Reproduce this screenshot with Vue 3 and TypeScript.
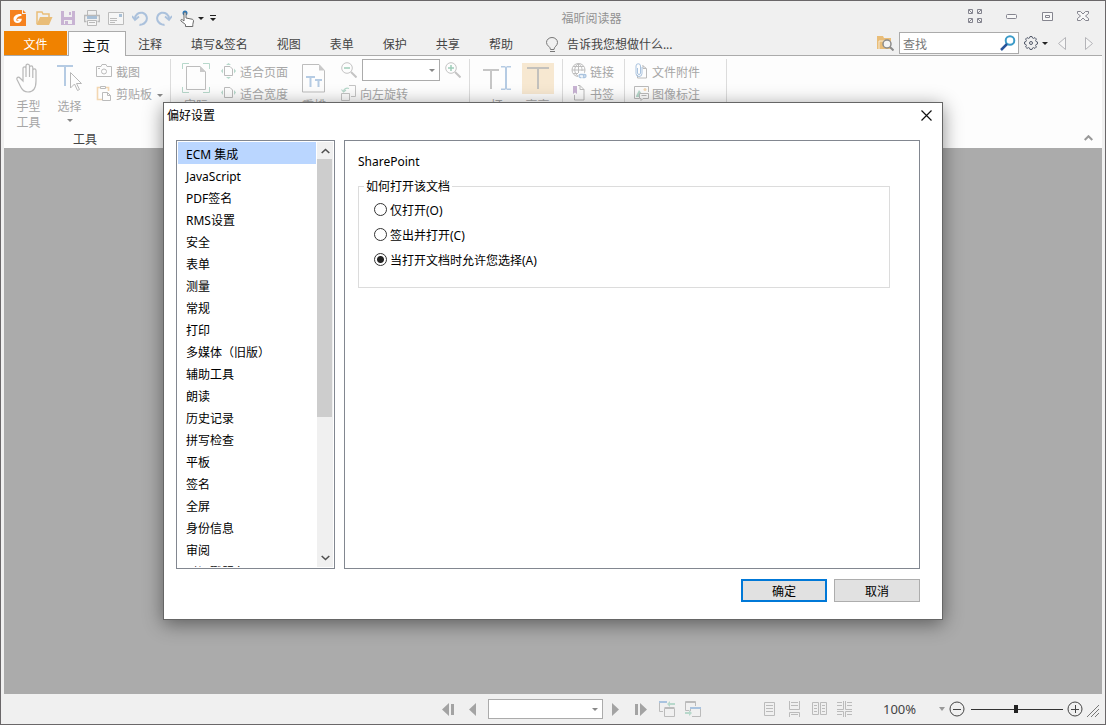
<script setup lang="ts">
import { ref } from 'vue'

const tabs: string[] = ['注释', '填写&签名', '视图', '表单', '保护', '共享', '帮助']

const categories: string[] = [
  'ECM 集成', 'JavaScript', 'PDF签名', 'RMS设置', '安全', '表单', '测量', '常规', '打印',
  '多媒体（旧版）', '辅助工具', '朗读', '历史记录', '拼写检查', '平板', '签名', '全屏',
  '身份信息', '审阅', '时间戳服务器',
]
const current = ref<string>('ECM 集成')

interface OpenMode { value: string; label: string }
const modes: OpenMode[] = [
  { value: 'open', label: '仅打开(O)' },
  { value: 'checkout', label: '签出并打开(C)' },
  { value: 'ask', label: '当打开文档时允许您选择(A)' },
]
const mode = ref<string>('ask')
const search = ref<string>('')
const dialogOpen = ref<boolean>(true)
</script>

<template>
  <div class="window">
    <header class="titlebar">
      <div class="quick">
        <span class="q logo">
          <svg width="16" height="16" viewBox="0 0 16 16"><path d="M0 0h12v4h4v12H0z" fill="#f5821f" /><path d="M13 0l3 3h-3z" fill="#f5821f" /><path d="M11.500 4.200C7 3.600 3.500 6 3.500 9.200c0 2.300 1.800 3.800 4 3.800 2.600 0 4.300-1.800 4.300-4.300H8.200c-.8 0-1.200 1-.9 1.800h1.600c-.4.6-1.200.8-1.900.5-1-.5-.9-2 .1-3.100 1-1.200 2.600-2 4.400-2.100z" fill="#fff" /></svg>
        </span>
        <button class="q" aria-label="打开">
          <svg width="17" height="16" viewBox="0 0 17 16"><path d="M1 14V2h5l1 2h6v3" fill="none" stroke="#e9bd78" stroke-width="1.500" /><path d="M0.500 15L4 7h12.500L13 15z" fill="#e9bd78" /></svg>
        </button>
        <button class="q" aria-label="保存">
          <svg width="14" height="14" viewBox="0 0 14 14"><path d="M0 0h14v14H0z" fill="#c8b3d3" /><path d="M3 0h8v6H3zM3 9h8v4H3z" fill="#f0f0f0" /><path d="M8 1h2v3H8zM4 10h3v3H4z" fill="#c8b3d3" /></svg>
        </button>
        <button class="q" aria-label="打印">
          <svg width="16" height="16" viewBox="0 0 16 16" fill="none" stroke="#b9b9b9"><path d="M3.500 5V.5h9V5" /><path d="M2.500 11.500h-2v-6h15v6h-2" stroke-width="1.500" /><path d="M3 7.500h10" stroke="#a8bfd6" stroke-width="3" /><path d="M3.500 10.500h9v5h-9z" fill="#f5f5f5" /><path d="M5 12.500h6" /></svg>
        </button>
        <button class="q" aria-label="邮件">
          <svg width="16" height="13" viewBox="0 0 16 13" fill="none" stroke="#bcbcbc"><path d="M.5.5h15v12H.5z" fill="#f6f6f6" /><path d="M2 6.500h7M2 8.500h7M2 10.500h5" /><path d="M11 2h3v3h-3z" fill="#a8bfd6" stroke="none" /></svg>
        </button>
        <button class="q" aria-label="撤销">
          <svg width="16" height="15" viewBox="0 0 16 15"><path d="M3 8C3 3.500 7 1 10.500 1.800C15 3 16 8 13.500 11 11.500 13.500 8.500 14 7.500 13.500" fill="none" stroke="#abc1dc" stroke-width="2" /><path d="M0 5l3 4 4-3.500" fill="none" stroke="#abc1dc" stroke-width="1.800" /></svg>
        </button>
        <button class="q" aria-label="重做">
          <svg width="16" height="15" viewBox="0 0 16 15"><path d="M13 8C13 3.500 9 1 5.500 1.800C1 3 0 8 2.500 11 4.500 13.500 7.500 14 8.500 13.500" fill="none" stroke="#abc1dc" stroke-width="2" /><path d="M16 5l-3 4-4-3.500" fill="none" stroke="#abc1dc" stroke-width="1.800" /></svg>
        </button>
        <button class="q touch" aria-label="触摸模式">
          <svg width="15" height="17" viewBox="0 0 15 17"><circle cx="5" cy="3" r="2.500" fill="#2f78b5" /><path d="M4 11V3.500c0-1.300 2-1.300 2 0V8l6 1.200c1 .3 1.500.8 1.500 1.800l-.7 3.500v2H5.500v-2L1 11c-.8-1.200.6-2 1.500-1.200z" fill="#fff" stroke="#6b6b6b" stroke-linejoin="round" /></svg>
        </button>
        <svg class="dd" width="6" height="3" viewBox="0 0 6 3"><path d="M0 0h6L3 3z" fill="#222" /></svg>
        <svg class="more" width="6" height="6" viewBox="0 0 6 6"><path d="M0 0h6v1H0zM0 3h6L3 6z" fill="#222" /></svg>
      </div>
      <div class="app-title">福昕阅读器</div>
      <div class="controls">
        <button aria-label="全屏">
          <svg width="14" height="14" viewBox="0 0 14 14" fill="none" stroke="#85858f"><path d="M.5.5h4v4h-4zM9.500.5h4v4h-4zM.5 9.500h4v4h-4zM9.500 9.500h4v4h-4zM1 1l3 3M13 1l-3 3M1 13l3-3M13 13l-3-3" /></svg>
        </button>
        <button aria-label="最小化">
          <svg width="11" height="5" viewBox="0 0 11 5"><rect x=".5" y=".5" width="10" height="4" rx="1" fill="#f8f8f8" stroke="#85858f" /></svg>
        </button>
        <button aria-label="最大化">
          <svg width="11" height="9" viewBox="0 0 11 9" fill="#f8f8f8" stroke="#85858f"><path d="M.5.5h10v8H.5zM3.500 3.500h4v2h-4z" /></svg>
        </button>
        <button aria-label="关闭">
          <svg width="12" height="10" viewBox="0 0 12 10"><path d="M.5.5h3L6 3 8.500.500h3v2L8.500 5l3 2.500v2h-3L6 7 3.500 9.500h-3v-2l3-2.500-3-2.500z" fill="#f8f8f8" stroke="#85858f" /></svg>
        </button>
      </div>
    </header>

    <nav class="tabs">
      <button class="file">文件</button>
      <button class="home">主页</button>
      <button v-for="t in tabs" :key="t" class="tab">{{ t }}</button>
      <button class="tell">
        <svg width="13" height="16" viewBox="0 0 13 16" fill="none" stroke="#777"><path d="M4.500 12.500c0-3-4-3.500-4-7a5.500 5 0 0 1 11 0c0 3.500-3.500 4-3.500 7zM4 14.500h5" /></svg>
        告诉我您想做什么...
      </button>
      <div class="find">
        <svg width="17" height="16" viewBox="0 0 17 16"><path d="M0 1h6l1 2h7v11H0z" fill="#e9bd78" /><path d="M2 14V6h6" fill="none" stroke="#f7ead3" /><circle cx="10" cy="9" r="4" fill="#f4f4f4" stroke="#8b8b8b" stroke-width="1.500" /><path d="M13 12l3.500 3.500" stroke="#8b8b8b" stroke-width="2" /></svg>
        <div class="searchbox">
          <input v-model="search" type="text" placeholder="查找" aria-label="查找">
          <svg width="16" height="16" viewBox="0 0 16 16" fill="none"><circle cx="10" cy="5.500" r="4.300" stroke="#3b9bc8" stroke-width="2" /><path d="M7 9L1 15" stroke="#27549b" stroke-width="2.500" /></svg>
        </div>
        <button class="gear" aria-label="设置">
          <svg width="14" height="14" viewBox="0 0 14 14" fill="none" stroke="#555c6c"><path d="M5.500 2L6 .5h2L8.500 2l1 .4L11 1.600 12.400 3l-.8 1.500.4 1 1.500.5v2L12 8.500l-.4 1 .8 1.500-1.400 1.400-1.500-.8-1 .4-.5 1.500H6L5.500 12l-1-.4-1.500.8L1.600 11l.8-1.500-.4-1L.5 8V6L2 5.500l.4-1L1.600 3 3 1.600l1.500.8z" /><circle cx="7" cy="7" r="1.500" /></svg>
          <svg width="6" height="3" viewBox="0 0 6 3"><path d="M0 0h6L3 3z" fill="#222" /></svg>
        </button>
        <button class="step" aria-label="上一个"><svg width="8" height="13" viewBox="0 0 8 13"><path d="M7.500.5v12L.5 6.500z" fill="#f6f6f6" stroke="#b4b4b8" /></svg></button>
        <button class="step" aria-label="下一个"><svg width="8" height="13" viewBox="0 0 8 13"><path d="M.5.5v12l7-6z" fill="#f6f6f6" stroke="#b4b4b8" /></svg></button>
      </div>
    </nav>

    <section class="ribbon">
      <div class="group tools">
        <div class="row">
          <button class="big" disabled>
            <svg width="25" height="30" viewBox="0 0 25 30" fill="none" stroke="#b8b8b8" stroke-width="1.200"><path d="M7 18V5.500c0-2.300 3-2.300 3 0V14 3c0-2.600 3.500-2.600 3.500 0v11V4.500c0-2.300 3.300-2.300 3.300 0V15 7.500c0-2.200 3.200-2.200 3.200 0V18c0 7-2.500 11-8 11-4.500 0-6-2-7.500-5.500L1 16.500c-.7-2 1.500-3.200 3-1.500z" /></svg>
            <span>手型<br>工具</span>
          </button>
          <button class="big" disabled>
            <svg width="25" height="30" viewBox="0 0 25 30"><path d="M0 2h16v2H0zM7 2h2v21H7z" fill="#b5cbe3" /><path d="M13.500 9.500v15.500l4-4 3 6.500 2-1-3-6h5z" fill="#fdfdfd" stroke="#b8b8b8" /></svg>
            <span>选择</span>
            <svg class="down" width="6" height="3" viewBox="0 0 6 3"><path d="M0 0h6L3 3z" fill="#888" /></svg>
          </button>
          <div class="stack">
            <button disabled>
              <svg class="icon" width="16" height="16" viewBox="0 0 16 16" fill="none" stroke="#bbb"><path d="M.5 3.500H5l1-2h4l1 2h4.500v10H.5z" /><circle cx="8" cy="8.500" r="2.500" /><path d="M2 5.500h2" /></svg>
              截图
            </button>
            <button disabled>
              <svg class="icon" width="16" height="16" viewBox="0 0 16 16" fill="none"><path d="M6 14.500H1.500v-12H5M10 2.500h2.500V6" stroke="#f3d7b2" stroke-width="1.600" /><path d="M4.500 3.500v-2h5v2z" stroke="#bbb" /><path d="M6.500 7.500h5l3 3v5h-8zM11.500 7.500v3h3" fill="#fdfdfd" stroke="#bbb" /></svg>
              剪贴板
              <svg class="after" width="6" height="3" viewBox="0 0 6 3"><path d="M0 0h6L3 3z" fill="#888" /></svg>
            </button>
          </div>
        </div>
        <div class="group-name">工具</div>
      </div>

      <div class="group view">
        <button class="big" disabled>
          <svg width="28" height="32" viewBox="0 0 28 32" fill="none"><path d="M.5 6V.5H7M21 .5h6.500V6M.5 24v5.500H7M21 29.500h6.500V24" stroke="#b7d8cb" /><path d="M4.500 3.500H18l5.500 5.500v17.500h-19z" stroke="#bdbdbd" /><path d="M18 3l6 6h-6z" fill="#c9c9c9" /></svg>
          <span>实际</span>
        </button>
        <div class="stack">
          <button disabled>
            <svg class="icon" width="15" height="16" viewBox="0 0 15 16" fill="none"><path d="M3.500 3.500H9l2.500 2.500v6.500h-8z" stroke="#bbb" /><path d="M5 2l2.500-2L10 2zM5 14l2.500 2 2.500-2zM2 5.500L0 8l2 2.500zM13 5.500L15 8l-2 2.500z" fill="#b7d8cb" /></svg>
            适合页面
          </button>
          <button disabled>
            <svg class="icon" width="15" height="16" viewBox="0 0 15 16" fill="none"><path d="M3.500 2.500H9l2.500 2.500v7.500h-8z" stroke="#bbb" /><path d="M2 5L0 7.500 2 10zM13 5l2 2.500-2 2.500z" fill="#b7d8cb" /></svg>
            适合宽度
          </button>
        </div>
        <button class="big reflow" disabled>
          <svg width="24" height="32" viewBox="0 0 24 32" fill="none"><path d="M.5 1.500H17l5.500 6v21.500H.5z" stroke="#bdbdbd" /><path d="M17 1.500l6 6h-6z" fill="#c9c9c9" /><path d="M4 13h9v2h-3.500v9h-2v-9H4zM13 16h7v2h-2.500v6h-2v-6H13z" fill="#b5cbe3" /></svg>
          <span>重排</span>
        </button>
        <div class="zoom-tools">
          <div class="line">
            <svg width="16" height="16" viewBox="0 0 16 16" fill="none"><circle cx="6" cy="6" r="5.300" stroke="#c4c4c4" /><path d="M10 10l5.500 5.500" stroke="#c4c4c4" stroke-width="2" /><path d="M3 6h6" stroke="#9fcdb9" stroke-width="1.500" /></svg>
            <div class="combo small">
              <select aria-label="缩放比例"><option></option></select>
              <svg width="6" height="3" viewBox="0 0 6 3"><path d="M0 0h6L3 3z" fill="#888" /></svg>
            </div>
            <svg width="16" height="16" viewBox="0 0 16 16" fill="none"><circle cx="6" cy="6" r="5.300" stroke="#c4c4c4" /><path d="M10 10l5.500 5.500" stroke="#c4c4c4" stroke-width="2" /><path d="M3 6h6M6 3v6" stroke="#9fcdb9" stroke-width="1.500" /></svg>
          </div>
          <button class="line rotate" disabled>
            <svg class="icon" width="16" height="16" viewBox="0 0 16 16" fill="none"><path d="M8 .5h6.500v11H10M.5 8.500h8v7h-8zM8.500 8.500v3" stroke="#c4c4c4" /><path d="M2.500 7C2.500 4 5 2.500 8 3.500M.5 4.500l2 2.500 2.500-2" stroke="#b7d8cb" stroke-width="1.200" /></svg>
            向左旋转
          </button>
        </div>
      </div>

      <div class="group text-tools">
        <button class="big" disabled>
          <svg width="30" height="32" viewBox="0 0 30 32"><path d="M1 6h16v2H1zM8 6h2v20H8z" fill="#c6c6c6" /><path d="M19 3h4l1 1 1-1h4v1.500h-4V25.500h4V27h-4l-1-1-1 1h-4v-1.500h4V4.500h-4z" fill="#b5cbe3" /></svg>
          <span>打</span>
        </button>
        <button class="big" disabled>
          <svg width="32" height="32" viewBox="0 0 32 32"><path d="M0 0h32v31H0z" fill="#f7e8d1" /><path d="M5 4h22v2H5zM15 4h2v22h-2z" fill="#c3c1bd" /></svg>
          <span>高亮</span>
        </button>
      </div>

      <div class="group links">
        <div class="stack">
          <button disabled>
            <svg class="icon" width="16" height="16" viewBox="0 0 16 16" fill="none" stroke="#bdbdbd"><circle cx="7.500" cy="7" r="6.500" /><path d="M1 7h13M2 3.500h11M2 10.500h6M7.500.500v13M7.500.500c-5 3-5 10 0 13M7.500.500C11 3 11 6 11 8" /><path d="M7 10h9v6H7z" fill="#fdfdfd" stroke="none" /><path d="M10.500 14.500h-1a1.500 1.500 0 0 1 0-3h2a1.500 1.500 0 0 1 1 2.500M12.500 11.500h1a1.500 1.500 0 0 1 0 3h-2" stroke="#a9c3df" stroke-width="1.300" /></svg>
            链接
          </button>
          <button disabled>
            <svg class="icon" width="16" height="16" viewBox="0 0 16 16" fill="none"><path d="M7 .5h2l4 4v10.500H3.500V10M9 .5v4h4" stroke="#bbb" /><path d="M2 1h4v8L4 7.500 2 9z" fill="#c8b3d3" /></svg>
            书签
          </button>
        </div>
      </div>

      <div class="group attach">
        <div class="stack">
          <button disabled>
            <svg class="icon" width="16" height="16" viewBox="0 0 16 16" fill="none"><path d="M8.500 2.500l4 3v9.500H3.500V12M9 2.500v3h3" stroke="#bbb" /><path d="M3.500 5v5a1.500 1.500 0 0 0 3 0V3A2 2 0 0 0 2 3v7.500a3 3 0 0 0 6 0V4" stroke="#a9c3df" /></svg>
            文件附件
          </button>
          <button disabled>
            <svg class="icon" width="16" height="16" viewBox="0 0 16 16" fill="none"><path d="M5 13.500H.5V1.500h14V7" stroke="#bbb" /><path d="M2 11l3-6 3 4v3H2z" fill="#b7d8cb" /><circle cx="11" cy="4.500" r="1.500" fill="#f3d7b2" /><path d="M5.500 8.500h9v5H9l-2 2v-2H5.500zM7.500 10.500h5" fill="#fdfdfd" stroke="#bbb" /></svg>
            图像标注
          </button>
        </div>
      </div>
      <button class="collapse" aria-label="折叠功能区"><svg width="9" height="6" viewBox="0 0 9 6"><path d="M.7 5l3.800-3.800L8.300 5" fill="none" stroke="#999" stroke-width="2" /></svg></button>
    </section>

    <main class="workspace"></main>

    <footer class="status">
      <div class="pager">
        <button aria-label="第一页"><svg width="12" height="13" viewBox="0 0 12 13"><path d="M7 0v13L0 6.500zM9 1h3v11H9z" fill="#a3a3a3" /></svg></button>
        <button aria-label="上一页"><svg width="7" height="13" viewBox="0 0 7 13"><path d="M7 0v13L0 6.500z" fill="#a3a3a3" /></svg></button>
        <div class="combo page">
          <select aria-label="页码"><option></option></select>
          <svg width="6" height="3" viewBox="0 0 6 3"><path d="M0 0h6L3 3z" fill="#888" /></svg>
        </div>
        <button aria-label="下一页"><svg width="7" height="13" viewBox="0 0 7 13"><path d="M0 0v13l7-6.500z" fill="#a3a3a3" /></svg></button>
        <button aria-label="最后一页"><svg width="12" height="13" viewBox="0 0 12 13"><path d="M5 0v13l7-6.500zM0 1h3v11H0z" fill="#a3a3a3" /></svg></button>
        <button aria-label="上一视图"><svg width="16" height="16" viewBox="0 0 16 16" fill="none"><path d="M.5 1v9.500H4" stroke="#bbb" /><path d="M0 1h8" stroke="#a9c3df" stroke-width="2" /><path d="M5.500 7.500h10v8h-10z" stroke="#bbb" /><path d="M5.500 6.500h10" stroke="#bbb" /><path d="M8 3l3-3v2h5v2h-5v2z" fill="#b7d8cb" /></svg></button>
        <button aria-label="下一视图"><svg width="16" height="16" viewBox="0 0 16 16" fill="none"><path d="M4 9.500H.5v-9h10V5M0 1.500h10" stroke="#bbb" /><path d="M7 15.500h8.500V7M5.500 7v3" stroke="#bbb" /><path d="M5 7h11" stroke="#a9c3df" stroke-width="2" /><path d="M7 12l-3-3v2H0v2h4v2z" fill="#b7d8cb" /></svg></button>
      </div>
      <div class="views">
        <button aria-label="单页"><svg width="16" height="16" viewBox="0 0 16 16" fill="none" stroke="#bbb"><path d="M2.500 1.500h10v13h-10zM4 4.500h7M4 7.500h7M4 10.500h7" /></svg></button>
        <button aria-label="连续"><svg width="16" height="16" viewBox="0 0 16 16" fill="none" stroke="#bbb"><path d="M2.500 0v8.500h10V0M2.500 16v-4.500h10V16M4 1.500h7M4 4.500h7M4 13.500h7" /></svg></button>
        <button aria-label="双页"><svg width="16" height="16" viewBox="0 0 16 16" fill="none" stroke="#bbb"><path d="M.5 1.500h6v12h-6zM8.500 1.500h6v12h-6zM2 4.500h3M2 7.500h3M2 10.500h3M10 4.500h3M10 7.500h3M10 10.500h3" /></svg></button>
        <button aria-label="双页连续"><svg width="16" height="16" viewBox="0 0 16 16" fill="none" stroke="#bbb"><path d="M0 8.500h6.500V0M15 8.500H8.500V0M0 10.500h6.500V16M15 10.500H8.500V16M0 1.500h5M0 4.500h5M10 1.500h5M10 4.500h5M0 13.500h5M10 13.500h5" /></svg></button>
      </div>
      <div class="scale">
        <span class="percent">100%</span>
        <svg width="6" height="4" viewBox="0 0 6 4"><path d="M0 0h6L3 4z" fill="#999" /></svg>
        <button aria-label="缩小"><svg width="16" height="16" viewBox="0 0 16 16" fill="none" stroke="#444"><circle cx="8" cy="8" r="7" /><path d="M4 8.500h8" /></svg></button>
        <input class="slider" type="range" min="0" max="100" value="49" aria-label="缩放">
        <button aria-label="放大"><svg width="16" height="16" viewBox="0 0 16 16" fill="none" stroke="#444"><circle cx="8" cy="8" r="7" /><path d="M4 8.500h8M8.500 4v8" /></svg></button>
        <svg class="grip" width="13" height="13" viewBox="0 0 13 13"><path d="M0 12L12 0M4 12l8-8M8 12l4-4" stroke="#777" /></svg>
      </div>
    </footer>

    <div v-if="dialogOpen" class="overlay">
      <div class="dialog" role="dialog" aria-labelledby="prefs-title">
        <div class="dialog-head">
          <span id="prefs-title">偏好设置</span>
          <button aria-label="关闭对话框" @click="dialogOpen = false"><svg width="11" height="11" viewBox="0 0 11 11"><path d="M.5.5l10 10M10.500.5l-10 10" stroke="#111" stroke-width="1.200" /></svg></button>
        </div>
        <div class="dialog-body">
          <div class="listbox">
            <div class="items">
              <button v-for="c in categories" :key="c" :class="{ active: c === current }" @click="current = c">{{ c }}</button>
            </div>
            <div class="scroll">
              <svg width="9" height="6" viewBox="0 0 9 6"><path d="M.7 5l3.800-3.500L8.300 5" fill="none" stroke="#505050" stroke-width="1.600" /></svg>
              <div class="track"><div class="thumb"></div></div>
              <svg width="9" height="6" viewBox="0 0 9 6"><path d="M.7 1l3.800 3.500L8.300 1" fill="none" stroke="#505050" stroke-width="1.600" /></svg>
            </div>
          </div>
          <div class="panel">
            <div class="heading">SharePoint</div>
            <fieldset>
              <legend>如何打开该文档</legend>
              <label v-for="m in modes" :key="m.value">
                <input v-model="mode" type="radio" name="mode" :value="m.value">
                <span>{{ m.label }}</span>
              </label>
            </fieldset>
          </div>
        </div>
        <div class="actions">
          <button class="primary" @click="dialogOpen = false">确定</button>
          <button @click="dialogOpen = false">取消</button>
        </div>
      </div>
    </div>
  </div>
</template>

<style>
body { margin: 0; }
</style>

<style scoped>
* { box-sizing: border-box; }
button, input, select { font: inherit; color: inherit; margin: 0; }
button { border: 0; background: none; padding: 0; white-space: nowrap; }
svg { display: block; flex: none; }

.window {
  position: relative;
  display: flex;
  flex-direction: column;
  min-height: 100vh;
  padding: 0 3px;
  border: 1px solid #6a6769;
  background: #f0f0f0;
  color: #444;
  font: 12px/16px "Noto Sans", "Noto Sans CJK SC", sans-serif;
}

/* title bar */
.titlebar { display: flex; height: 30px; }
.quick { display: flex; align-items: center; width: 221px; padding: 4px 0 0 4px; }
.q { display: flex; justify-content: center; width: 24px; flex: none; }
.q.logo { width: 20px; margin-right: 4px; }
.q.touch { width: 22px; }
.more { margin-left: 6px; }
.app-title { flex: 1; padding-top: 10px; text-align: center; color: #929292; }
.controls { display: flex; }
.controls button { display: flex; width: 36px; padding-right: 2px; align-items: center; justify-content: center; }

/* tab strip */
.tabs { display: flex; height: 25px; border-bottom: 1px solid #ababab; }
.tabs > button { flex: none; padding-top: 4px; }
.file { width: 63px; background: #f08200; color: #fff; }
.tabs > .home { width: 58px; height: 25px; margin: 0 -2px 0 1px; padding: 3px 2px 0 0; border: 1px solid #ababab; border-bottom: 0; background: #fdfdfd; color: #111; font-size: 14px; }
.tabs > .tab { padding: 4px 14px 0; margin-right: 1px; }
.tabs > .tell { display: flex; align-items: center; gap: 8px; padding: 4px 0 0 18px; }
.find { display: flex; align-items: center; margin-left: auto; height: 24px; }
.searchbox { display: flex; align-items: center; width: 120px; height: 22px; margin: 0 5px; padding: 0 2px 0 3px; border: 1px solid #ababab; background: #fff; }
.searchbox input { flex: 1; min-width: 0; height: 20px; padding: 2px 0 0; border: 0; outline: 0; background: none; }
.searchbox input::placeholder { color: #777; opacity: 1; }
.gear { display: flex; align-items: center; gap: 4px; }
.step { display: flex; justify-content: center; width: 27px; }

/* ribbon */
.ribbon { display: flex; align-items: flex-start; height: 92px; padding-top: 3px; background: #fdfdfd; color: #a6a6a6; }
.group { display: flex; height: 89px; border-right: 1px solid #dcdcdc; }
.row { display: flex; }
.big { display: flex; flex-direction: column; align-items: center; padding-top: 4px; }
.big span { padding-top: 3px; }
.down { margin-top: 4px; }
.stack { display: flex; flex-direction: column; margin-top: 3px; }
.stack button { display: flex; align-items: center; gap: 4px; height: 22px; }
.icon { margin-bottom: 4px; }
.after { margin-left: 1px; }
.tools { flex-direction: column; width: 167px; padding-left: 4px; }
.tools .row { height: 73px; }
.tools .big { width: 41px; }
.tools .big span { padding-top: 6px; }
.tools .stack { margin-left: 6px; }
.group-name { width: 154px; text-align: center; color: #444; }
.view { width: 299px; padding-left: 11px; }
.view .stack { margin-left: 11px; }
.reflow { margin-left: 14px; }
.zoom-tools { margin-left: 15px; }
.line { display: flex; align-items: center; height: 22px; gap: 5px; }
.zoom-tools .rotate { gap: 3px; margin-top: 3px; }
.combo { display: grid; align-items: center; border: 1px solid #ababab; background: #fff; }
.combo select { grid-area: 1 / 1; width: 100%; height: 100%; border: 0; padding: 0; appearance: none; background: none; }
.combo svg { grid-area: 1 / 1; justify-self: end; margin-right: 4px; pointer-events: none; }
.small { width: 78px; height: 22px; }
.text-tools { width: 93px; padding-left: 11px; gap: 10px; }
.text-tools .big { width: 31px; }
.links { width: 62px; padding-left: 8px; }
.links .stack button { gap: 3px; }
.attach { width: 102px; padding-left: 9px; }
.attach .stack button { gap: 2px; }
.collapse { align-self: flex-end; margin: 0 9px 7px auto; }

.workspace { flex: 1; background: #ababab; }

/* status bar */
.status { display: flex; align-items: center; height: 30px; }
.pager { display: flex; align-items: center; gap: 10px; margin-left: auto; }
.pager > button:first-child { margin-right: 5px; }
.page { width: 115px; height: 20px; margin: 0 -1px 0 2px; }
.pager > button:nth-child(5) { margin-left: 6px; }
.pager > button:nth-child(6) { margin-left: 2px; }
.views { display: flex; gap: 9px; margin-left: 61px; }
.scale { display: flex; align-items: center; margin-left: 30px; }
.percent { width: 56px; font-size: 13px; }
.scale button { margin-left: 4px; }
.slider { width: 92px; height: 16px; margin: 0 0 0 6px; appearance: none; background: linear-gradient(#333, #333) center / 100% 1px no-repeat; }
.slider::-webkit-slider-thumb { appearance: none; width: 4px; height: 8px; background: #222; }
.grip { margin: 5px 2px 0 4px; }

/* preferences dialog */
.overlay { position: absolute; inset: 0; display: flex; align-items: center; justify-content: center; padding-bottom: 3px; }
.dialog { width: 780px; max-width: 100%; border: 1px solid #666; background: #fff; color: #000; box-shadow: 0 4px 18px rgba(0, 0, 0, 0.45); }
.dialog-head { display: flex; align-items: center; justify-content: space-between; height: 25px; padding: 0 10px 0 3px; }
.dialog-body { display: flex; gap: 9px; height: 429px; margin: 12px 22px 0 12px; }
.listbox { display: flex; width: 159px; padding: 1px; border: 1px solid #828790; }
.items { flex: 1; height: 425px; overflow: hidden; }
.items button { display: block; width: 100%; height: 22px; padding: 3px 8px 0; text-align: left; }
.items .active { background: #bad6ff; }
.scroll { display: flex; flex-direction: column; align-items: center; width: 16px; margin-left: 1px; padding: 6px 0; background: #f0f0f0; }
.track { flex: 1; width: 16px; margin: 5px 0; }
.thumb { width: 15px; height: 66%; background: #cdcdcd; }
.panel { flex: 1; padding: 13px 29px 0 13px; border: 1px solid #828790; }
fieldset { height: 111px; margin: 7px 0 0; padding: 2px 15px 0; border: 1px solid #dcdcdc; }
legend { margin-left: -10px; padding: 2px 2px 0; }
fieldset label { display: flex; align-items: center; gap: 3px; height: 25px; }
fieldset label span { padding-top: 3px; }
fieldset input { width: 13px; height: 13px; flex: none; appearance: none; border: 1px solid #333; border-radius: 50%; background: #fff; }
fieldset input:checked { background: radial-gradient(circle, #222 0 3px, #fff 4px); }
.actions { display: flex; justify-content: flex-end; gap: 7px; padding: 10px 22px 17px; }
.actions button { width: 86px; height: 23px; padding-top: 2px; border: 1px solid #adadad; background: #e1e1e1; }
.actions .primary { border: 2px solid #0078d7; }
</style>
